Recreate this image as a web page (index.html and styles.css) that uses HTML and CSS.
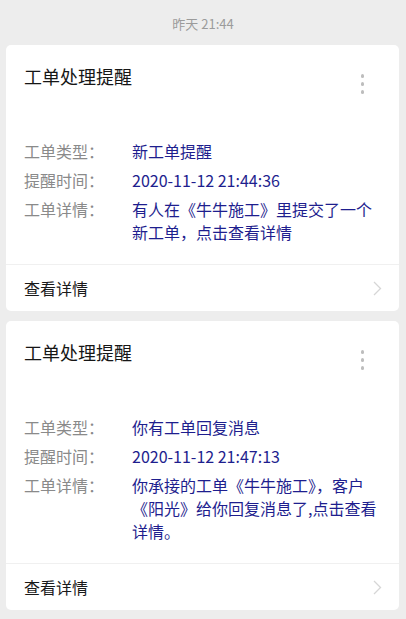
FILE: index.html
```html
<!DOCTYPE html>
<html lang="zh-CN">
<head>
    <meta charset="UTF-8">
    <meta name="viewport" content="width=device-width, initial-scale=1.0">
    <title>工单处理提醒</title>
    <link rel="stylesheet" href="styles.css">
</head>
<body>
    <div class="time">昨天 21:44</div>

    <div class="card">
        <div class="card-head">
            <h3 class="card-title">工单处理提醒</h3>
            <span class="more"><i></i><i></i><i></i></span>
        </div>
        <div class="rows">
            <div class="row">
                <span class="label">工单类型：</span>
                <span class="value">新工单提醒</span>
            </div>
            <div class="row">
                <span class="label">提醒时间：</span>
                <span class="value">2020-11-12 21:44:36</span>
            </div>
            <div class="row">
                <span class="label">工单详情：</span>
                <span class="value">有人在《牛牛施工》里提交了一个新工单，点击查看详情</span>
            </div>
        </div>
        <div class="card-foot">
            <span>查看详情</span>
            <svg class="arrow" width="9" height="15" viewBox="0 0 9 15"><polyline points="1,1 7.5,7.5 1,14" fill="none" stroke="#d6d6d6" stroke-width="1.3"/></svg>
        </div>
    </div>

    <div class="card">
        <div class="card-head">
            <h3 class="card-title">工单处理提醒</h3>
            <span class="more"><i></i><i></i><i></i></span>
        </div>
        <div class="rows">
            <div class="row">
                <span class="label">工单类型：</span>
                <span class="value">你有工单回复消息</span>
            </div>
            <div class="row">
                <span class="label">提醒时间：</span>
                <span class="value">2020-11-12 21:47:13</span>
            </div>
            <div class="row">
                <span class="label">工单详情：</span>
                <span class="value">你承接的工单《牛牛施工》，客户《阳光》给你回复消息了,点击查看详情。</span>
            </div>
        </div>
        <div class="card-foot">
            <span>查看详情</span>
            <svg class="arrow" width="9" height="15" viewBox="0 0 9 15"><polyline points="1,1 7.5,7.5 1,14" fill="none" stroke="#d6d6d6" stroke-width="1.3"/></svg>
        </div>
    </div>
</body>
</html>
```

FILE: styles.css
```css
body {
    margin: 0;
    padding: 15px 0 10px;
    background-color: #ededed;
    font-family: "Noto Sans CJK SC", "Noto Sans", sans-serif;
    color: #1a1a1a;
}
.time {
    text-align: center;
    font-size: 13px;
    line-height: 18px;
    color: #9b9b9b;
    margin-bottom: 12px;
}
.card {
    margin: 0 7px 10px 6px;
    background: white;
    border-radius: 5px;
}
.card-head {
    display: flex;
    justify-content: space-between;
    align-items: flex-start;
    height: 24px;
    padding: 19px 35px 0 18px;
}
.card-title {
    margin: 0;
    font-size: 18px;
    font-weight: normal;
    line-height: 24px;
    color: #161616;
}
.more {
    display: flex;
    flex-direction: column;
    gap: 4.5px;
    padding-top: 10px;
}
.more i {
    display: block;
    width: 3.5px;
    height: 3.5px;
    border-radius: 50%;
    background: #bdbdbd;
}
.rows {
    display: flex;
    flex-direction: column;
    gap: 6px;
    padding: 52px 17px 20px 18px;
    border-bottom: 1px solid #f0f0f0;
}
.row {
    display: flex;
    font-size: 16px;
    line-height: 23px;
}
.label {
    flex: 0 0 108px;
    color: #8a8a8a;
}
.value {
    width: 250px;
    color: #1e1e8e;
}
.card-foot {
    display: flex;
    justify-content: space-between;
    align-items: center;
    height: 46px;
    padding: 0 17px 0 18px;
    font-size: 16px;
    color: #1a1a1a;
}
```
